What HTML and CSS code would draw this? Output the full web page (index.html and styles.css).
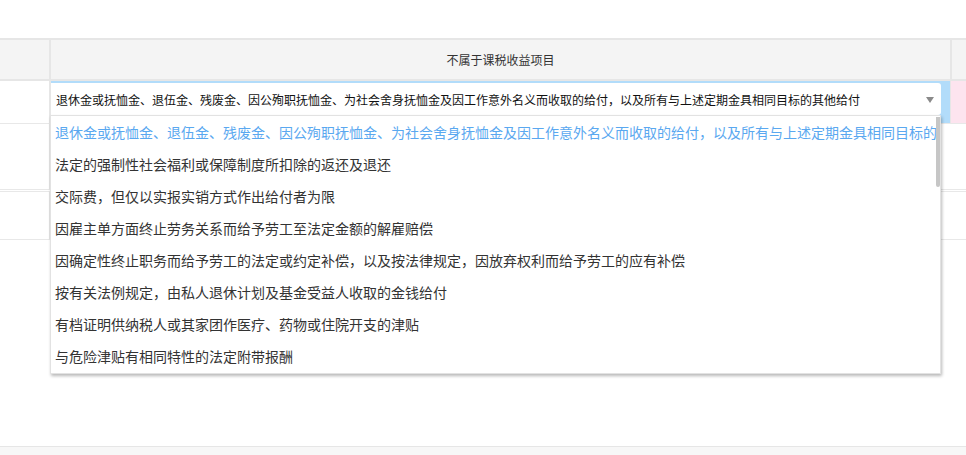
FILE: index.html
```html
<!DOCTYPE html>
<html lang="zh-CN">
<head>
<meta charset="utf-8">
<title>不属于课税收益项目</title>
<link rel="stylesheet" href="styles.css">
</head>
<body>
<div class="page">
  <div class="table">
    <div class="row head">
      <div class="c1"></div>
      <div class="c2 head-title">不属于课税收益项目</div>
      <div class="c3"></div>
    </div>
    <div class="row sel-row">
      <div class="c1"></div>
      <div class="c2 sel-cell">
        <div class="select">
          <span class="sel-text">退休金或抚恤金、退伍金、残废金、因公殉职抚恤金、为社会舍身抚恤金及因工作意外名义而收取的给付，以及所有与上述定期金具相同目标的其他给付</span>
          <span class="caret"></span>
          <div class="dropdown">
            <ul class="list">
              <li class="item active">退休金或抚恤金、退伍金、残废金、因公殉职抚恤金、为社会舍身抚恤金及因工作意外名义而收取的给付，以及所有与上述定期金具相同目标的其他给付</li>
              <li class="item">法定的强制性社会福利或保障制度所扣除的返还及退还</li>
              <li class="item">交际费，但仅以实报实销方式作出给付者为限</li>
              <li class="item">因雇主单方面终止劳务关系而给予劳工至法定金额的解雇赔偿</li>
              <li class="item">因确定性终止职务而给予劳工的法定或约定补偿，以及按法律规定，因放弃权利而给予劳工的应有补偿</li>
              <li class="item">按有关法例规定，由私人退休计划及基金受益人收取的金钱给付</li>
              <li class="item">有档证明供纳税人或其家团作医疗、药物或住院开支的津贴</li>
              <li class="item">与危险津贴有相同特性的法定附带报酬</li>
            </ul>
            <div class="bar"><div class="thumb"></div></div>
          </div>
        </div>
      </div>
      <div class="c3 pink"></div>
    </div>
    <div class="row r3">
      <div class="c1"></div>
      <div class="c2"></div>
      <div class="c3"></div>
    </div>
    <div class="row r4">
      <div class="c1"></div>
      <div class="c2"></div>
      <div class="c3"></div>
    </div>
  </div>
  <div class="band"></div>
</div>
</body>
</html>
```

FILE: styles.css
```css
* { box-sizing: border-box; }
html, body { margin: 0; padding: 0; background: #fff; }
body {
  font-family: "Microsoft YaHei", "Noto Sans CJK SC", "Noto Sans", sans-serif;
  color: #333;
  width: 966px;
  height: 455px;
  overflow: hidden;
}
.page {
  height: 455px;
  display: flex;
  flex-direction: column;
}
.table {
  margin-top: 38px;
  border-top: 2px solid #e6e6e6;
}
.row {
  display: grid;
  grid-template-columns: 49px 901px 1fr;
}
.head {
  height: 41px;
  background: #f4f4f4;
  border-bottom: 2px solid #e6e6e6;
}
.head .c2 { border-left: 2px solid #e6e6e6; }
.head .c3 { border-left: 2px solid #e6e6e6; }
.head-title {
  display: flex;
  align-items: center;
  justify-content: center;
  font-size: 12px;
  color: #333;
}
.sel-row {
  height: 43px;
  border-bottom: 1px solid #e8e8e8;
}
.sel-row .c2 { border-left: 2px solid #e6e6e6; }
.sel-cell {
  background: #b2dcfa;
  padding: 2px 9px 0 0;
}
.pink {
  background: #fde4ef;
  border-left: 1px solid #e6e6e6;
}
.select {
  position: relative;
  height: 32px;
  background: #fff;
  border-radius: 0 3px 3px 0;
  display: flex;
  align-items: center;
  padding: 0 7px 0 5px;
}
.sel-text {
  flex: 1;
  font-size: 12px;
  color: #111;
  white-space: nowrap;
  overflow: hidden;
}
.caret {
  width: 0;
  height: 0;
  border-left: 4.5px solid transparent;
  border-right: 4.5px solid transparent;
  border-top: 6px solid #8a8a8a;
  margin-top: 2px;
}
.dropdown {
  position: absolute;
  left: -1px;
  top: 32px;
  width: 891px;
  height: 259px;
  background: #fff;
  border: 1px solid #e2e2e2;
  box-shadow: 1px 2px 3px rgba(0, 0, 0, 0.28);
  display: flex;
  z-index: 10;
}
.list {
  flex: 1;
  min-width: 0;
  margin: 0;
  padding: 0;
  list-style: none;
  overflow: hidden;
}
.item {
  height: 32px;
  line-height: 32px;
  padding-left: 4px;
  font-size: 14px;
  color: #333;
  white-space: nowrap;
}
.item.active { color: #5aa8f0; }
.bar {
  width: 4px;
  padding-top: 1px;
}
.thumb {
  height: 70px;
  background: #c6c6c6;
  border-radius: 0 0 2px 2px;
}
.r3 {
  height: 66px;
  border-bottom: 1px solid #e8e8e8;
}
.r3 .c2, .r4 .c2 { border-left: 2px solid #e6e6e6; }
.r4 {
  margin-top: 1px;
  height: 49px;
  border-top: 1px solid #e8e8e8;
  border-bottom: 1px solid #e8e8e8;
}
.band {
  margin-top: auto;
  height: 9px;
  background: #f7f7f7;
  border-top: 1px solid #e6e6e6;
}
```
